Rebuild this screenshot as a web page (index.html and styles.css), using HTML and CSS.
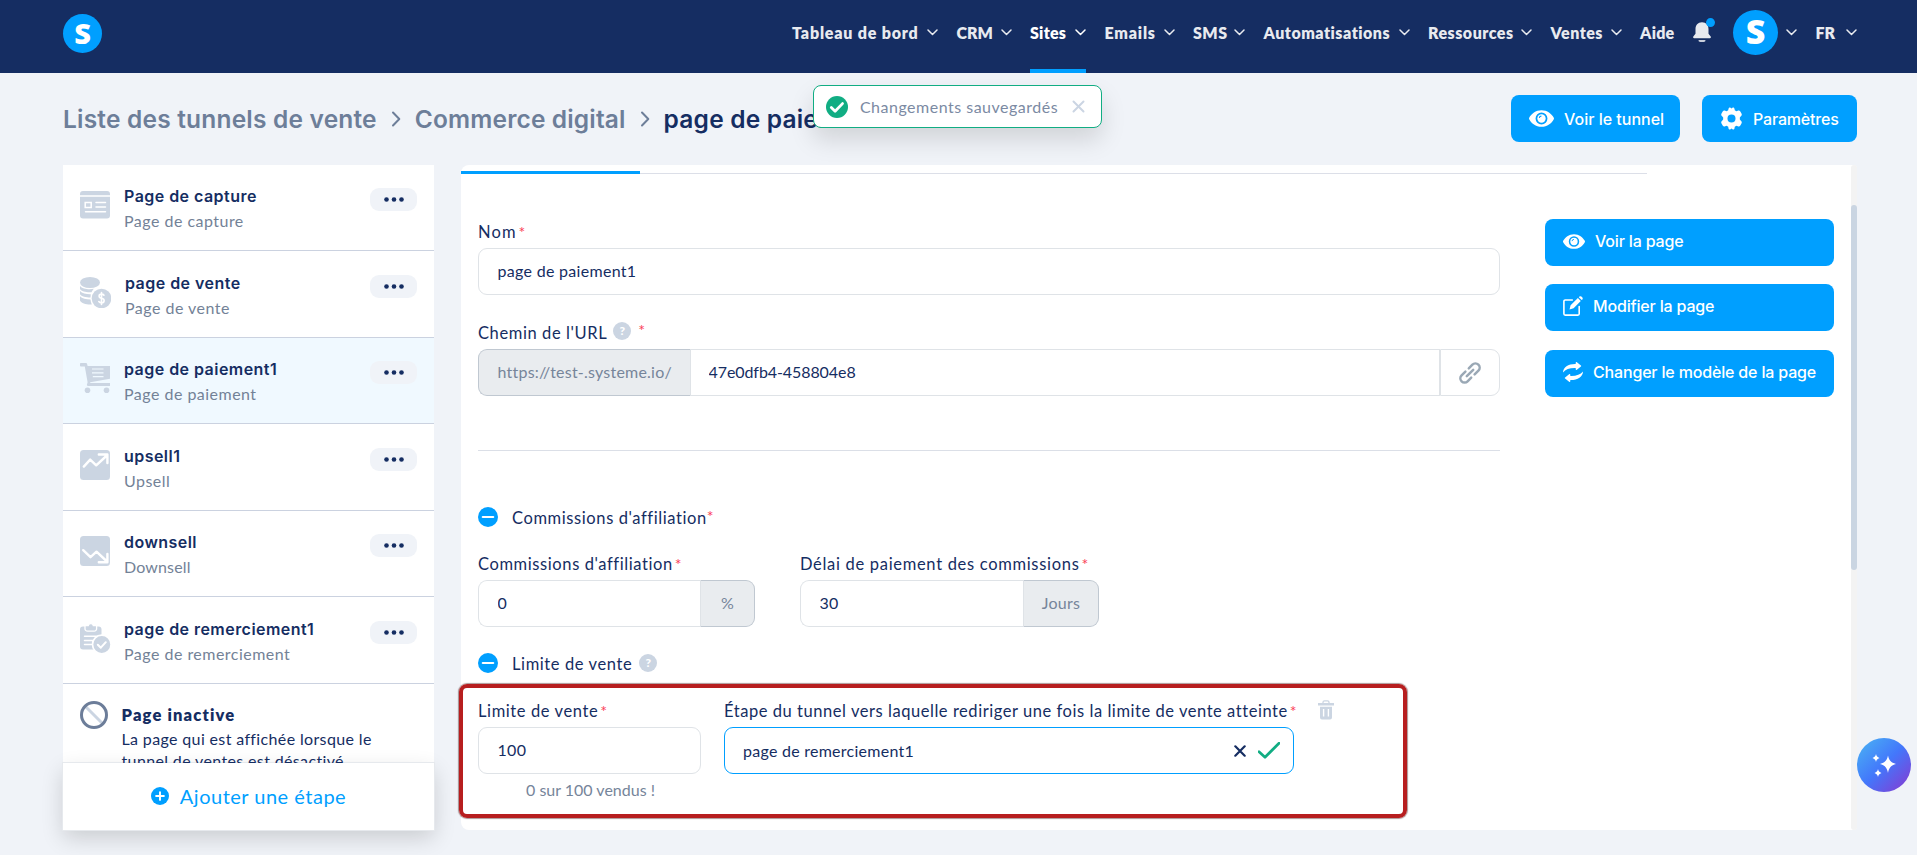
FILE: index.html
```html
<!DOCTYPE html>
<html lang="fr">
<head>
    <meta charset="UTF-8">
    <meta name="viewport" content="width=device-width, initial-scale=1.0">
    <title>Tunnel de vente</title>
    <link rel="stylesheet" href="styles.css">
</head>
<body>
    <!-- Icônes partagées -->
    <svg class="sprite" width="0" height="0">
        <symbol id="chevron" viewBox="0 0 11 7"><path d="M1 1l4.5 4.5L10 1" fill="none" stroke="currentColor" stroke-width="1.5" stroke-linecap="round" stroke-linejoin="round"/></symbol>
        <symbol id="right" viewBox="0 0 10 16"><path d="M2 1.5L8.3 8 2 14.5" fill="none" stroke="currentColor" stroke-width="2" stroke-linecap="round" stroke-linejoin="round"/></symbol>
        <symbol id="eye" viewBox="0 0 24 16"><path fill="currentColor" fill-rule="evenodd" d="M12 0C6.5 0 2.200 3.400.2 7.300a1.500 1.500 0 0 0 0 1.400C2.200 12.600 6.500 16 12 16s9.800-3.400 11.800-7.300a1.500 1.500 0 0 0 0-1.400C21.800 3.400 17.500 0 12 0zm0 2.300a5.700 5.700 0 1 1 0 11.400 5.700 5.700 0 0 1 0-11.400z"/><circle cx="12" cy="8" r="4" fill="currentColor"/><path d="M9.900 7.600a2 2 0 0 1 2-1.900" fill="none" stroke="#009fff" stroke-width="1"/></symbol>
        <symbol id="dots" viewBox="0 0 20 5"><circle cx="2.500" cy="2.500" r="2.300"/><circle cx="10" cy="2.500" r="2.300"/><circle cx="17.500" cy="2.500" r="2.300"/></symbol>
        <symbol id="minus" viewBox="0 0 20 20"><circle cx="10" cy="10" r="10" fill="#009fff"/><path d="M4.800 10h10.400" stroke="#fff" stroke-width="2.200" stroke-linecap="round"/></symbol>
    </svg>

    <header class="topbar">
        <div class="logo">S</div>
        <nav class="nav">
            <a class="nav-item n-tableau"><span>Tableau de bord</span><svg class="chev"><use href="#chevron"/></svg></a>
            <a class="nav-item n-crm"><span>CRM</span><svg class="chev"><use href="#chevron"/></svg></a>
            <a class="nav-item n-sites active"><span>Sites</span><svg class="chev"><use href="#chevron"/></svg></a>
            <a class="nav-item n-emails"><span>Emails</span><svg class="chev"><use href="#chevron"/></svg></a>
            <a class="nav-item"><span>SMS</span><svg class="chev"><use href="#chevron"/></svg></a>
            <a class="nav-item"><span>Automatisations</span><svg class="chev"><use href="#chevron"/></svg></a>
            <a class="nav-item"><span>Ressources</span><svg class="chev"><use href="#chevron"/></svg></a>
            <a class="nav-item"><span>Ventes</span><svg class="chev"><use href="#chevron"/></svg></a>
            <a class="nav-item n-aide"><span>Aide</span></a>
            <a class="nav-item">
                <svg class="bell" width="22" height="25" viewBox="0 0 22 25"><path fill="#e8eaef" d="M9 4.200c4.200 0 6.500 2.900 6.500 7v4.600l2.200 2.800c.5.800.2 1.600-.7 1.600H1c-.9 0-1.200-.8-.7-1.600l2.200-2.800v-4.600c0-4.100 2.300-7 6.500-7z"/><path d="M5.500 22h7a1.800 1.800 0 0 1-1.800 2H7.300a1.800 1.800 0 0 1-1.800-2z" fill="#c9cfdb"/><circle cx="17.500" cy="4.600" r="4.500" fill="#009fff"/></svg>
            </a>
            <a class="nav-item"><span class="avatar">S</span><svg class="chev"><use href="#chevron"/></svg></a>
            <a class="nav-item n-fr"><span>FR</span><svg class="chev"><use href="#chevron"/></svg></a>
        </nav>
    </header>

    <div class="toast">
        <svg width="22" height="22" viewBox="0 0 22 22"><circle cx="11" cy="11" r="11" fill="#11ad83"/><path d="M5.300 11.500l3.800 3.800 7.400-7.700" fill="none" stroke="#fff" stroke-width="2.800" stroke-linecap="round" stroke-linejoin="round"/></svg>
        <span class="toast-text">Changements sauvegardés</span>
        <svg width="13" height="13" viewBox="0 0 13 13"><path d="M1.500 1.500l10 10M11.500 1.500l-10 10" stroke="#cbd5e3" stroke-width="2" stroke-linecap="round"/></svg>
    </div>

    <div class="page-head">
        <div class="breadcrumb">
            <span>Liste des tunnels de vente</span>
            <svg class="sep"><use href="#right"/></svg>
            <span class="bc-funnel">Commerce digital</span>
            <svg class="sep"><use href="#right"/></svg>
            <span class="current">page de paiement1</span>
        </div>
        <div class="head-actions">
            <button class="btn btn-tunnel"><svg width="25" height="17"><use href="#eye"/></svg><span>Voir le tunnel</span></button>
            <button class="btn btn-params">
                <svg width="23" height="23" viewBox="0 0 24 24"><path fill="#fff" fill-rule="evenodd" d="M8.600 3.400L8.800 2.200C9 .6 10.200.2 11 .8L12 1.600l1-.8c.8-.6 2-.2 2.200 1.400l.2 1.200 1.700 1 1.400-.5c1.400-.5 2.200 0 2.700.9l1.200 2.100c.6 1.100.4 1.900-.4 2.600L20.700 11v2l1.300 1.500c.8.700 1 1.500.4 2.600l-1.200 2.100c-.5.9-1.300 1.400-2.700.9l-1.400-.5-1.700 1-.2 1.200c-.2 1.600-1.400 2-2.200 1.400l-1-.8-1 .8c-.8.600-2 .2-2.200-1.400l-.2-1.200-1.700-1-1.400.5c-1.400.5-2.200 0-2.700-.9l-1.200-2.100c-.6-1.100-.4-1.900.4-2.600L3.300 13v-2L2 9.500c-.8-.7-1-1.500-.4-2.600l1.200-2.100c.5-.9 1.300-1.400 2.700-.9l1.400.5zM12 7.800a4.200 4.200 0 1 0 0 8.400 4.200 4.200 0 0 0 0-8.400z"/></svg>
                <span>Paramètres</span>
            </button>
        </div>
    </div>

    <div class="content">
        <aside class="sidebar">
            <div class="steps">
                <div class="step">
                    <svg class="step-icon" width="31" height="31" viewBox="0 0 31 31"><path fill="#cbd5e2" d="M0 3a3 3 0 0 1 3-3h24a3 3 0 0 1 3 3v1.200H0zM0 5.700h30V24.500a3 3 0 0 1-3 3H3a3 3 0 0 1-3-3z"/><path d="M5.200 11.400h6v5h-6zM16 11.400h9.500M16 16h9.500M5.500 20.700h20" fill="none" stroke="#fff" stroke-width="1.500" stroke-linecap="round"/></svg>
                    <div class="step-text"><div class="step-title">Page de capture</div><div class="step-sub">Page de capture</div></div>
                    <button class="more"><svg><use href="#dots"/></svg></button>
                </div>
                <div class="step step-wide">
                    <svg class="step-icon" width="31" height="31" viewBox="0 0 31 31"><g fill="#cbd5e2"><ellipse cx="10" cy="5.500" rx="10" ry="5.500"/><path d="M0 8.700c1.600 2.700 6 3.500 9.500 3.500 1.600 0 3-.2 4.300-.5a11 11 0 0 0-2.300 3.500C7 15.500 1.500 14.800 0 12zM0 14c2 2.500 6.500 3.300 10.800 3.200l-.3 3.300C6 20.500 1.500 19.700 0 17.300zM0 19.300c2 2.200 6 3.100 10.500 3.100.1 1.800.6 3.500 1.300 5C7 27.800 1.500 26.500 0 23.500z"/><circle cx="21.500" cy="21.500" r="9.800"/></g><path d="M24 18.200c-.6-.8-1.500-1.100-2.500-1.100-3.200 0-3.200 3.700 0 4.200 3.600.6 3.400 4.600 0 4.600-1.200 0-2.100-.5-2.700-1.300M21.500 15.500v12" fill="none" stroke="#fff" stroke-width="1.600" stroke-linecap="round"/></svg>
                    <div class="step-text"><div class="step-title">page de vente</div><div class="step-sub">Page de vente</div></div>
                    <button class="more"><svg><use href="#dots"/></svg></button>
                </div>
                <div class="step selected">
                    <svg class="step-icon" width="31" height="31" viewBox="0 0 31 31"><path fill="#cbd5e2" fill-rule="evenodd" d="M0 1C0 .4.4 0 1 0h5c.6 0 1 .3 1.100.9L7.600 3H30v12.800L10.200 19.200l-.1.800H30v3H8c-.8 0-1.200-.5-1.100-1.200l.7-2.500L4.800 3.400H1.200C.5 3.400 0 3 0 2.400zM12 5.400v1.200h11.500V5.400zm0 3.800v1.200h11.500V9.200zm.8 3.800v1.200h10.700V13z"/><circle cx="7.500" cy="27.300" r="2.800" fill="#cbd5e2"/><circle cx="26.500" cy="27.300" r="2.800" fill="#cbd5e2"/></svg>
                    <div class="step-text"><div class="step-title">page de paiement1</div><div class="step-sub">Page de paiement</div></div>
                    <button class="more"><svg><use href="#dots"/></svg></button>
                </div>
                <div class="step">
                    <svg class="step-icon" width="31" height="31" viewBox="0 0 31 31"><rect width="30" height="30" rx="3.500" fill="#cbd5e2"/><path d="M3.800 16.600l6.400-7 6 5.700L27.400 5M18.800 4.500h8.600V13" fill="none" stroke="#fff" stroke-width="2.400" stroke-linecap="round" stroke-linejoin="round"/></svg>
                    <div class="step-text"><div class="step-title">upsell1</div><div class="step-sub">Upsell</div></div>
                    <button class="more"><svg><use href="#dots"/></svg></button>
                </div>
                <div class="step">
                    <svg class="step-icon" width="31" height="31" viewBox="0 0 31 31"><rect width="30" height="30" rx="3.500" fill="#cbd5e2"/><path d="M3.200 14.200l7.300 7 6-5.500L27 25.500M18.800 26.300h8.600V18" fill="none" stroke="#fff" stroke-width="2.400" stroke-linecap="round" stroke-linejoin="round"/></svg>
                    <div class="step-text"><div class="step-title">downsell</div><div class="step-sub tight">Downsell</div></div>
                    <button class="more"><svg><use href="#dots"/></svg></button>
                </div>
                <div class="step">
                    <svg class="step-icon" width="31" height="31" viewBox="0 0 31 31"><rect y="3.500" width="21.500" height="23" rx="3" fill="#cbd5e2"/><path d="M5 2.500h3.300a2.600 2.600 0 0 1 5 0h3.300v3a2.500 2.500 0 0 1-2.500 2.700H7.500A2.500 2.500 0 0 1 5 5.500z" fill="#cbd5e2" stroke="#fff" stroke-width="1.300"/><path d="M4.500 13.300h13M4.500 17.400h9M4.500 21.500h7" stroke="#fff" stroke-width="1.500" stroke-linecap="round"/><circle cx="21.800" cy="21.500" r="9.300" fill="#cbd5e2" stroke="#fff" stroke-width="1.700"/><path d="M17.800 21.700l3 3 5-5.500" fill="none" stroke="#fff" stroke-width="2" stroke-linecap="round" stroke-linejoin="round"/></svg>
                    <div class="step-text"><div class="step-title">page de remerciement1</div><div class="step-sub">Page de remerciement</div></div>
                    <button class="more"><svg><use href="#dots"/></svg></button>
                </div>
                <div class="inactive">
                    <svg width="28" height="28" viewBox="0 0 28 28"><path d="M5.500 5.500l17 17" stroke="#cbd5e2" stroke-width="3"/><circle cx="14" cy="14" r="12.500" fill="none" stroke="#6c7d99" stroke-width="3"/></svg>
                    <div>
                        <div class="inactive-title">Page inactive</div>
                        <div class="inactive-text">La page qui est affichée lorsque le<br>tunnel de ventes est désactivé</div>
                    </div>
                </div>
            </div>
            <div class="add-step">
                <svg width="18" height="18" viewBox="0 0 18 18"><circle cx="9" cy="9" r="9" fill="#009fff"/><path d="M9 5.100v7.800M5.100 9h7.800" stroke="#fff" stroke-width="1.900" stroke-linecap="round"/></svg>
                <span>Ajouter une étape</span>
            </div>
        </aside>

        <main class="panel">
            <div class="form-column">
                <div class="tabs"><div class="tab-active"></div></div>
                <div class="form">
                    <label class="label l-nom">Nom<span class="req">*</span></label>
                    <input class="input" type="text" value="page de paiement1">

                    <label class="label label-url"><span>Chemin de l'URL</span><span class="help">?</span><span class="req">*</span></label>
                    <div class="group">
                        <span class="addon addon-url">https://test-.systeme.io/</span>
                        <input class="input i-url" type="text" value="47e0dfb4-458804e8">
                        <button class="link-btn">
                            <svg width="22" height="22" viewBox="0 0 22 22"><g fill="none" stroke="#9aa8b5" stroke-width="2.500" stroke-linecap="round"><path d="M9.800 6.300l3.600-3.600a4.200 4.200 0 0 1 6 6l-3.800 3.700"/><path d="M12.200 15.700l-3.600 3.600a4.200 4.200 0 0 1-6-6l3.800-3.700"/><path d="M7.800 14.200l6.400-6.400"/></g></svg>
                        </button>
                    </div>

                    <hr class="divider">

                    <div class="section"><svg><use href="#minus"/></svg><span>Commissions d'affiliation</span><span class="req">*</span></div>
                    <div class="row">
                        <div class="field-com">
                            <label class="label">Commissions d'affiliation<span class="req">*</span></label>
                            <div class="group"><input class="input" type="text" value="0"><span class="addon right">%</span></div>
                        </div>
                        <div class="field-delay">
                            <label class="label l-delay">Délai de paiement des commissions<span class="req">*</span></label>
                            <div class="group"><input class="input" type="text" value="30"><span class="addon right jours">Jours</span></div>
                        </div>
                    </div>

                    <div class="section section-limit"><svg><use href="#minus"/></svg><span>Limite de vente</span><span class="help">?</span></div>
                    <div class="limit-box">
                        <div class="field-limit">
                            <label class="label">Limite de vente<span class="req">*</span></label>
                            <input class="input" type="text" value="100">
                            <div class="sold">0 sur 100 vendus !</div>
                        </div>
                        <div class="field-redirect">
                            <label class="label l-redirect">Étape du tunnel vers laquelle rediriger une fois la limite de vente atteinte<span class="req">*</span></label>
                            <div class="select">
                                <span class="select-value">page de remerciement1</span>
                                <svg width="12" height="12" viewBox="0 0 12 12"><path d="M1.300 1.300l9.400 9.400M10.700 1.300l-9.400 9.400" stroke="#152d62" stroke-width="2.200" stroke-linecap="round"/></svg>
                                <svg width="22" height="17" viewBox="0 0 22 17"><path d="M1 9.700l6 5.600L21 1.200" fill="none" stroke="#11ad83" stroke-width="2.700" stroke-linecap="round" stroke-linejoin="round"/></svg>
                            </div>
                        </div>
                        <svg class="trash" width="16" height="20" viewBox="0 0 16 20"><path d="M5 3.500V2.300C5 1.300 5.600.8 6.500.8h3c.9 0 1.500.5 1.500 1.500v1.200" fill="none" stroke="#cbd5e2" stroke-width="1.300"/><path fill="#cbd5e2" fill-rule="evenodd" d="M0 3h16v2.500H0zM2 6.800h12v10.700a2 2 0 0 1-2 2H4a2 2 0 0 1-2-2zM4.900 9v7.500h1.400V9zm4.800 0v7.500h1.400V9z"/></svg>
                    </div>
                </div>
            </div>
            <div class="side-actions">
                <button class="btn"><svg width="22" height="15"><use href="#eye"/></svg><span>Voir la page</span></button>
                <button class="btn">
                    <svg width="20" height="20" viewBox="0 0 20 20"><path d="M9.300 4H2.200C1.400 4 .9 4.500.9 5.200v12.600c0 .8.5 1.300 1.300 1.300h12.700c.8 0 1.300-.5 1.300-1.300v-7.300" fill="none" stroke="#fff" stroke-width="1.600" stroke-linecap="round"/><path d="M6.500 13.500l1.100-4.200 7.300-7.200 2.900 2.900-7.200 7.300zM15.800 1.200l.7-.7c1.500-1.300 4.200 1.200 2.900 2.900l-.7.700z" fill="#fff"/></svg>
                    <span>Modifier la page</span>
                </button>
                <button class="btn">
                    <svg width="20" height="20" viewBox="0 0 20 20"><path fill="#fff" d="M0 10.500C.2 5 5.500 1.700 12.700 1.900V.8c0-.7.700-1 1.200-.6l4 3.200c.4.300.4.900 0 1.200l-4 3.200c-.5.400-1.200.1-1.200-.6V6.100C7 5.900 2.500 7.300 0 10.500zM20 9.500c-.2 5.500-5.500 8.800-12.700 8.600v1.100c0 .7-.7 1-1.200.6l-4-3.200a.8.800 0 0 1 0-1.200l4-3.200c.5-.4 1.200-.1 1.200.6v1.100c5.700.2 10.200-1.200 12.700-4.400z"/></svg>
                    <span>Changer le modèle de la page</span>
                </button>
            </div>
            <div class="scrollbar"><div class="thumb"></div></div>
        </main>
    </div>

    <button class="assistant">
        <svg width="24" height="23" viewBox="0 0 24 23"><g fill="#fff"><path d="M16 1.500c1.100 5 2.900 7 8 8.500-5.100 1.500-6.900 3.500-8 9-1.100-5.500-2.900-7.500-8-9 5.100-1.500 6.900-3.500 8-8.500z"/><path d="M4 0c.5 2.200 1.400 3.200 3.500 4C5.400 4.800 4.500 5.800 4 8 3.500 5.800 2.600 4.800.5 4 2.600 3.200 3.500 2.200 4 0zM6 15c.5 2.200 1.400 3.200 3.500 4-2.100.8-3 1.800-3.500 4-.5-2.200-1.400-3.200-3.500-4 2.100-.8 3-1.800 3.500-4z"/></g></svg>
    </button>
</body>
</html>
```
FILE: styles.css
```css
* {
    box-sizing: border-box;
}
body {
    margin: 0;
    height: 855px;
    overflow: hidden;
    background: #f0f3f8;
    color: #152d62;
    font-family: Lato, "Liberation Sans", sans-serif;
    font-size: 16px;
}
button, input {
    font: inherit;
    color: inherit;
}
svg {
    display: block;
    flex: none;
}
.sprite {
    position: absolute;
}

/* Barre du haut */
.topbar {
    height: 73px;
    padding: 0 60.500px 0 63px;
    background: #152d62;
    display: flex;
    justify-content: space-between;
}
.logo, .avatar {
    border-radius: 50%;
    background: #009fff;
    color: #fff;
    font-family: "Open Sans", sans-serif;
    font-weight: 800;
    text-align: center;
    letter-spacing: 0;
}
.logo {
    width: 39px;
    height: 39px;
    margin-top: 14px;
    font-size: 29px;
    line-height: 38px;
}
.avatar {
    width: 45px;
    height: 45px;
    font-size: 34px;
    line-height: 43px;
}
.nav {
    display: grid;
    grid-template-columns: 146px 55px 56px 70px 52px 146px 104px 71px 34px 22px 64px 41px;
    column-gap: 18.5px;
}
.nav-item {
    height: 73px;
    padding-bottom: 9px;
    display: flex;
    align-items: center;
    justify-content: space-between;
    color: #e8eaef;
    font-weight: 800;
    letter-spacing: 0.5px;
    white-space: nowrap;
}
.nav-item.active {
    padding-bottom: 5px;
    border-bottom: 4px solid #009fff;
    color: #fff;
}
.n-tableau, .n-emails {
    letter-spacing: 0.8px;
}
.n-crm, .n-fr {
    letter-spacing: 0;
}
.n-sites, .n-aide {
    letter-spacing: 0.25px;
}
.chev {
    width: 11px;
    height: 7px;
}
.bell {
    margin-bottom: 3px;
}

/* Notification */
.toast {
    position: absolute;
    left: 813px;
    top: 85px;
    width: 289px;
    height: 43px;
    padding: 0 16px 0 12px;
    display: flex;
    align-items: center;
    justify-content: space-between;
    background: #fff;
    border: 1px solid #11ad83;
    border-radius: 8px;
    box-shadow: 0 12px 24px rgba(0, 0, 0, 0.13);
    color: #7b8aa3;
}
.toast-text {
    padding: 0 2px 1px 0;
    letter-spacing: 0.5px;
}

/* Fil d'Ariane et boutons */
.page-head {
    height: 92px;
    padding: 22px 60px 0 63px;
    display: flex;
    justify-content: space-between;
    align-items: flex-start;
}
.breadcrumb {
    display: flex;
    align-items: center;
    gap: 14px;
    height: 48px;
    font-family: Inter, sans-serif;
    font-weight: 600;
    font-size: 24.500px;
    letter-spacing: 0.2px;
    color: #6d7e99;
    white-space: nowrap;
}
.bc-funnel {
    letter-spacing: 0.15px;
}
.sep {
    width: 10px;
    height: 16px;
}
.current {
    color: #152d62;
}
.head-actions {
    display: flex;
    gap: 22px;
}
.btn {
    height: 47px;
    padding: 0 18px;
    display: flex;
    align-items: center;
    gap: 10px;
    background: #009fff;
    border: none;
    border-radius: 8px;
    color: #fff;
    font-family: Inter, sans-serif;
    font-weight: 500;
    letter-spacing: -0.17px;
    white-space: nowrap;
}
.btn-tunnel {
    width: 169px;
    letter-spacing: 0;
}
.btn-params {
    width: 155px;
}

.content {
    display: flex;
    gap: 27px;
    padding-left: 63px;
}

/* Liste des étapes */
.sidebar {
    width: 371px;
    height: 665px;
    background: #fff;
}
.steps {
    height: 598px;
    overflow: hidden;
}
.step {
    height: 86.500px;
    padding: 19.500px 17px 0;
    display: flex;
    align-items: flex-start;
    border-bottom: 1px solid #cbd2e0;
}
.step:first-child {
    height: 86px;
    padding-top: 19px;
}
.step.selected {
    background: #f0f9ff;
}
.step-icon {
    margin-top: 6px;
}
.step:first-child .step-icon {
    margin-top: 7px;
}
.step-text {
    flex: 1;
    padding-left: 13px;
    white-space: nowrap;
}
.step-wide .step-text {
    padding-left: 14px;
}
.step-title {
    font-family: Inter, sans-serif;
    font-weight: 600;
    line-height: 24px;
    letter-spacing: 0.46px;
}
.step-sub {
    padding-top: 1px;
    line-height: 24px;
    letter-spacing: 0.48px;
    color: #738297;
}
.step-sub.tight {
    letter-spacing: 0.15px;
}
.more {
    width: 47px;
    height: 23px;
    margin-top: 4px;
    padding: 0;
    border: none;
    border-radius: 9px;
    background: #f0f3f8;
    display: flex;
    align-items: center;
    justify-content: center;
}
.more svg {
    width: 20px;
    height: 5px;
    fill: #152d62;
}
.inactive {
    display: flex;
    gap: 13.500px;
    padding: 17px;
    white-space: nowrap;
}
.inactive-title {
    padding-top: 2px;
    line-height: 24px;
    font-size: 16.500px;
    font-weight: 800;
    letter-spacing: 1.150px;
}
.inactive-text {
    padding-top: 1px;
    line-height: 22px;
    letter-spacing: 0.36px;
}
.add-step {
    height: 67px;
    padding-bottom: 1px;
    display: flex;
    align-items: center;
    justify-content: center;
    gap: 11px;
    color: #009fff;
    font-size: 20px;
    letter-spacing: 0.5px;
    background: #fff;
    box-shadow: 0 0 0 1px #e6e9ed, 0 8px 22px rgba(0, 0, 0, 0.16);
}

/* Panneau principal */
.panel {
    width: 1396px;
    height: 665px;
    display: flex;
    background: #fff;
    border-radius: 8px 4px 4px 8px;
}
.form-column {
    width: 1186px;
    margin-right: -102px;
}
.tabs {
    height: 9px;
    display: flex;
    align-items: flex-end;
    border-bottom: 1px solid #dcdfe8;
}
.tab-active {
    width: 179px;
    height: 3px;
    margin-bottom: -1px;
    background: #009fff;
}
.form {
    width: 1022px;
    margin-left: 17px;
    padding-top: 46px;
}
.label {
    display: flex;
    height: 28px;
    font-size: 16.500px;
    line-height: 24.500px;
    letter-spacing: 0.6px;
    white-space: nowrap;
}
.l-nom {
    letter-spacing: 1.100px;
}
.l-delay {
    letter-spacing: 0.69px;
}
.l-redirect {
    letter-spacing: 0.55px;
}
.req {
    margin-left: 2px;
    color: #fa3e57;
    font-size: 16px;
    line-height: 23px;
    letter-spacing: 0;
}
.input {
    width: 100%;
    height: 47px;
    display: block;
    padding: 0 18.500px 2px;
    background: #fff;
    border: 1px solid #dfe3e7;
    border-radius: 9px;
    outline: none;
    letter-spacing: 0.3px;
}
.i-url {
    padding-left: 17.500px;
    letter-spacing: -0.08px;
}
.label-url {
    margin-top: 25px;
    height: 29px;
    padding-top: 1px;
}
.label-url .req {
    margin-left: 7px;
    line-height: 17px;
}
.help {
    width: 18px;
    height: 18px;
    margin: 1px 0 0 6px;
    border-radius: 50%;
    background: #cbd5e2;
    color: #fff;
    font-size: 12px;
    font-weight: 900;
    line-height: 18px;
    text-align: center;
    letter-spacing: 0;
}
.group {
    display: flex;
    height: 47px;
}
.group .input {
    flex: 1;
    min-width: 0;
}
.addon {
    flex: none;
    padding: 0 18.500px;
    line-height: 43px;
    letter-spacing: 0.22px;
    background: #e9ecef;
    border: 1px solid #c0c8d1;
    border-right: none;
    border-radius: 9px 0 0 9px;
    color: #76859a;
    white-space: nowrap;
}
.addon-url {
    width: 212px;
}
.addon-url + .input {
    border-radius: 0;
}
.group .input:first-child {
    border-radius: 9px 0 0 9px;
    border-right: none;
}
.addon.right {
    width: 55px;
    padding: 0;
    border: 1px solid #c0c8d1;
    border-left-color: #dfe3e7;
    border-radius: 0 9px 9px 0;
    text-align: center;
}
.addon.jours {
    width: 76px;
}
.link-btn {
    width: 60px;
    background: #fff;
    border: 1px solid #dfe3e7;
    border-radius: 0 9px 9px 0;
    display: flex;
    align-items: center;
    justify-content: center;
}
.divider {
    height: 1px;
    margin: 54px 0 56px;
    border: none;
    background: #dbdfe7;
}
.section {
    height: 20px;
    display: flex;
    align-items: center;
    font-size: 16.500px;
    letter-spacing: 0.6px;
    white-space: nowrap;
}
.section svg {
    width: 20px;
    height: 20px;
    margin-right: 14px;
}
.section span {
    padding-top: 1px;
}
.section .req {
    margin: -4px 0 0;
}
.section .help {
    margin: 0 0 0 7px;
    padding: 0;
}
.row {
    display: flex;
    gap: 45px;
    margin-top: 25px;
}
.field-com {
    width: 277px;
}
.field-delay {
    width: 299px;
}
.section-limit {
    margin-top: 26px;
}
.limit-box {
    width: 948px;
    height: 134px;
    margin: 11px 0 0 -19px;
    padding: 11px 15px;
    display: flex;
    align-items: flex-start;
    border: 4px solid #b71e1f;
    border-radius: 8px;
    box-shadow: 0 0 1px 1px rgba(70, 20, 20, 0.45);
}
.field-limit {
    width: 223px;
    margin-right: 23px;
}
.sold {
    padding-left: 48px;
    line-height: 31px;
    color: #76859a;
    white-space: nowrap;
}
.field-redirect {
    width: 570px;
}
.select {
    height: 47px;
    padding: 0 13px 0 18px;
    display: flex;
    align-items: center;
    gap: 12px;
    border: 1px solid #009fff;
    border-radius: 9px;
}
.select-value {
    flex: 1;
    padding-bottom: 1px;
    letter-spacing: 0.26px;
}
.trash {
    margin: 1px 0 0 24px;
}
.side-actions {
    width: 289px;
    margin-top: 54px;
    position: relative;
    display: flex;
    flex-direction: column;
    gap: 18.300px;
}
.side-actions .btn {
    padding-bottom: 3px;
}
.scrollbar {
    width: 6px;
    margin-left: 17px;
    padding-top: 40px;
    background: #f3f3f3;
    border-radius: 4px;
}
.thumb {
    height: 365px;
    background: #cad5e2;
    border-radius: 3px;
}
.assistant {
    position: absolute;
    left: 1857px;
    top: 738px;
    width: 54px;
    height: 54px;
    padding: 0;
    border: none;
    border-radius: 50%;
    display: flex;
    align-items: center;
    justify-content: center;
    background: linear-gradient(135deg, #48a7f5 12%, #4377fb 50%, #7c43d8 90%);
}
```
